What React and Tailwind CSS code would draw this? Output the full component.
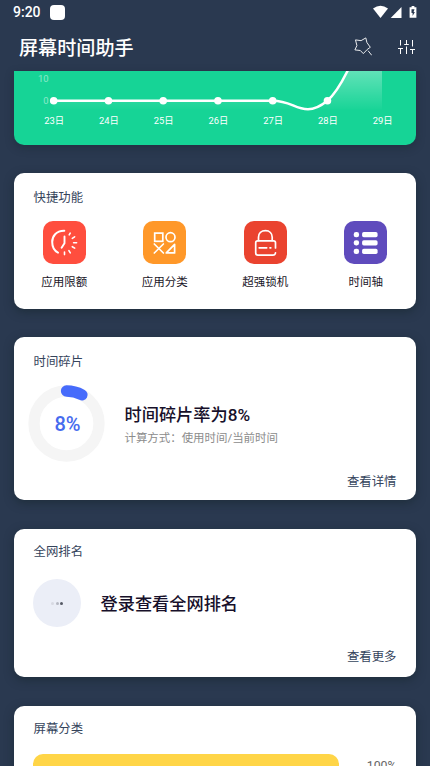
const days = ["23日", "24日", "25日", "26日", "27日", "28日", "29日"];

const shortcuts = [
  { label: "应用限额", color: "bg-[#ff4e3e]", Icon: LimitIcon },
  { label: "应用分类", color: "bg-[#ff9829]", Icon: CategoryIcon },
  { label: "超强锁机", color: "bg-[#ea432f]", Icon: LockIcon },
  { label: "时间轴", color: "bg-[#5f4bbd]", Icon: TimelineIcon },
];

function LimitIcon() {
  return (
    <svg viewBox="0 0 43 43" className="w-full h-full" fill="none" stroke="#fff" strokeLinecap="round">
      <path d="M21.3 9.8 C13 9.6 9.2 15.6 9.2 21 C9.2 26 11.5 29.8 15 31.6" strokeWidth="2" />
      <path d="M21.5 15.5 V22.2 L18.6 26.8" strokeWidth="1.9" />
      <path
        d="M26.2 13.8 L27.2 12.1 M29.3 17.3 L31.6 15.8 M30.6 21.7 H33.6 M29.3 25.7 L31.7 27.1 M25.9 29.6 L27.3 31.9 M21.5 31.1 V33.6"
        strokeWidth="1.6"
      />
    </svg>
  );
}

function CategoryIcon() {
  return (
    <svg viewBox="0 0 43 43" className="w-full h-full" fill="none" stroke="#fff" strokeWidth="1.7">
      <rect x="11.7" y="12.1" width="8.1" height="8.2" />
      <circle cx="27.5" cy="16.2" r="4.5" />
      <path d="M11.3 23 L20.4 32 M20.4 23 L11.3 32" strokeLinecap="round" />
      <path d="M31.6 23.3 V31.9 H23.3 Z" strokeLinejoin="round" />
    </svg>
  );
}

function LockIcon() {
  return (
    <svg viewBox="0 0 43 43" className="w-full h-full" fill="none" stroke="#fff" strokeLinecap="round" strokeLinejoin="round">
      <path d="M14.5 19.5 V16.2 C14.5 12.3 17.4 9.7 21.5 9.7 C25.6 9.7 28.2 12.3 28.2 16.2 V19.5" strokeWidth="1.7" />
      <path d="M31.5 27 V21.8 Q31.5 19.8 29.5 19.8 H13.7 Q11.7 19.8 11.7 21.8 V32.1 Q11.7 34.1 13.7 34.1 H29 Q31.3 34.1 31.5 31.8" strokeWidth="1.7" />
      <path d="M15.2 26.8 H22.7 M26 26.8 H26.8" strokeWidth="1.7" />
    </svg>
  );
}

function TimelineIcon() {
  return (
    <svg viewBox="0 0 43 43" className="w-full h-full" fill="#fff">
      {[11.1, 19.2, 27.8].map((y) => (
        <g key={y}>
          <rect x="9.7" y={y} width="5.4" height="5.2" rx="2.3" />
          <rect x="18.1" y={y} width="15.5" height="5.2" rx="1.7" />
        </g>
      ))}
    </svg>
  );
}

function Card({ title, className = "", children }) {
  return (
    <section className={`flex flex-col rounded-[10px] bg-white px-[19.5px] shadow-[0_3px_10px_rgba(20,35,40,0.5)] ${className}`}>
      <h2 className="text-[12.4px] leading-[18px] text-[#35445c]">{title}</h2>
      {children}
    </section>
  );
}

function StatusBar() {
  return (
    <div className="flex h-6 items-center justify-between px-[13px] text-white">
      <div className="flex items-center gap-[10px]">
        <span className="w-[27px] font-[Roboto] text-[14px] font-medium leading-6">9:20</span>
        <span className="h-[15px] w-[15px] rounded-[4px] bg-white" />
      </div>
      <svg viewBox="0 0 44 14" className="mb-px h-[14px] w-[44px]" fill="#fff">
        <path d="M0 3.4 Q7.5 -1.9 15 3.4 L7.5 13 Z" />
        <path d="M28.5 2 V13 H17.7 Z" />
        <path d="M37 2.2 H38.6 V1 H41.4 V2.2 H43.4 V12.8 H36.6 V2.2 Z" />
        <path d="M41.5 4.2 H38.5 V8 H39.6 V11 L41.9 6.9 H40.6 Z" fill="#2a3950" />
      </svg>
    </div>
  );
}

function Header() {
  return (
    <header className="flex h-[47px] items-center justify-between pb-px pl-[19px] pr-[15px] text-white">
      <h1 className="pt-[3px] text-[19.1px] font-medium leading-7">屏幕时间助手</h1>
      <div className="flex items-center gap-[25px]">
        <svg viewBox="0 0 18 20" className="h-5 w-[18px]" fill="none" stroke="#fff" strokeWidth="0.9" strokeLinejoin="round" strokeLinecap="round">
          <path d="M11.9 1.3 L12.9 5.5 L16.3 10.3 L13.3 12.4 L9.3 16.6 L6.3 13.5 L0.9 12.9 L2.9 8.6 L1.5 2.9 L6.7 3.6 Z" />
          <path d="M14.3 14 L17.5 18" />
        </svg>
        <svg viewBox="0 0 18 16" className="h-4 w-[18px]" fill="none" stroke="#fff" strokeWidth="1">
          <path d="M3.5 1 V6.5 M1 9.5 H6 M3.5 9.5 V15 M9.5 1 V5.5 M7.2 5.5 H11.8 M9.5 7.5 V15 M15.5 1 V7.5 M13 10.5 H18 M15.5 10.5 V15" />
        </svg>
      </div>
    </header>
  );
}

function UsageChart() {
  return (
    <svg viewBox="0 0 402 74" className="block h-[74px] w-[402px] font-[Roboto,'Noto_Sans_CJK_SC',sans-serif]">
      <defs>
        <linearGradient id="area" x1="0" y1="-20" x2="0" y2="39" gradientUnits="userSpaceOnUse">
          <stop offset="0" stopColor="#fff" stopOpacity="0.48" />
          <stop offset="1" stopColor="#fff" stopOpacity="0.01" />
        </linearGradient>
      </defs>
      <path
        d="M39.7 29.7 H258.6 C276 29.7 281 38.3 294 38.3 C302 38.3 308 34 313.4 29.7 C320 24 327 13 333.5 0 L343 -18 H368 V38.5 H39.7 Z"
        fill="url(#area)"
      />
      <path
        d="M39.7 29.7 H258.6 C276 29.7 281 38.3 294 38.3 C302 38.3 308 34 313.4 29.7 C320 24 327 13 333.5 0 L343 -18"
        fill="none"
        stroke="#fff"
        strokeWidth="2.5"
      />
      <g fill="#fff" fillOpacity="0.5" fontSize="9.5" textAnchor="end">
        <text x="34.7" y="11.3">10</text>
        <text x="34.7" y="32.8">0</text>
      </g>
      {days.map((day, i) => (
        <g key={day} fill="#fff">
          {i < 6 && <circle cx={39.7 + i * 54.75} cy="29.7" r="3.8" />}
          <text x={40.3 + i * 54.75} y="53.2" fontSize="9.4" textAnchor="middle">
            {day}
          </text>
        </g>
      ))}
    </svg>
  );
}

function FragmentRing() {
  return (
    <div className="grid h-[77px] w-[77px] shrink-0 place-items-center">
      <svg viewBox="0 0 77 77" className="col-start-1 row-start-1 h-full w-full" fill="none" strokeWidth="11.3">
        <circle cx="38.5" cy="38.5" r="32.5" stroke="#f5f5f5" />
        <path d="M38.5 6 A32.5 32.5 0 0 1 54 9.9" stroke="#466bfb" strokeLinecap="round" />
      </svg>
      <span className="col-start-1 row-start-1 pl-[2px] pt-px font-[Roboto] text-[20px] font-medium leading-6 text-[#466bee]">8%</span>
    </div>
  );
}

export default function App() {
  return (
    <div lang="zh-CN" className="h-[766px] w-[430px] overflow-hidden bg-[#2a3950] font-[Roboto,'Noto_Sans_CJK_SC',sans-serif]">
      <StatusBar />
      <Header />

      <main className="flex flex-col px-[14px]">
        {/* USAGE CHART */}
        <section className="h-[74px] overflow-hidden rounded-b-[10px] bg-[#16d496] shadow-[0_3px_8px_rgba(20,35,40,0.35)]">
          <UsageChart />
        </section>

        {/* SHORTCUTS */}
        <Card title="快捷功能" className="mt-[28px] h-[136px] pt-[16px]">
          <div className="-mx-[19.5px] mt-[14px] grid grid-cols-4">
            {shortcuts.map(({ label, color, Icon }) => (
              <div key={label} className="flex flex-col items-center">
                <div className={`h-[43px] w-[43px] rounded-[10px] ${color}`}>
                  <Icon />
                </div>
                <span className="mt-[9px] text-[11.5px] leading-[18px] text-[#191527]">{label}</span>
              </div>
            ))}
          </div>
        </Card>

        {/* TIME FRAGMENTS */}
        <Card title="时间碎片" className="mt-[28px] h-[163px] pt-[16px]">
          <div className="-ml-[5.5px] mt-[14px] flex items-center">
            <FragmentRing />
            <div className="ml-[19.5px] pt-[3px]">
              <p className="text-[17.2px] font-medium leading-6 text-[#17102a]">时间碎片率为8%</p>
              <p className="mt-[2px] text-[11.45px] leading-[18px] text-[#8c8c8c]">计算方式：使用时间/当前时间</p>
            </div>
          </div>
          <a className="mt-[11px] self-end text-[12.4px] leading-[18px] text-[#35445c]">查看详情</a>
        </Card>

        {/* RANKING */}
        <Card title="全网排名" className="mt-[29px] h-[148px] pt-[14px]">
          <div className="-ml-[0.5px] mt-[18px] flex items-center">
            <div className="flex h-12 w-12 items-center justify-center gap-[1.5px] rounded-full bg-[#ebeef7]">
              <span className="h-[3px] w-[3px] rounded-full bg-[#d7d9e2]" />
              <span className="h-[3px] w-[3px] rounded-full bg-[#b5b8c2]" />
              <span className="h-[3px] w-[3px] rounded-full bg-[#555965]" />
            </div>
            <p className="ml-[19.5px] pt-[2px] text-[17.2px] font-medium leading-6 text-[#17102a]">登录查看全网排名</p>
          </div>
          <a className="mt-[21px] self-end text-[12.4px] leading-[18px] text-[#35445c]">查看更多</a>
        </Card>

        {/* SCREEN CATEGORIES */}
        <Card title="屏幕分类" className="mt-[29px] h-[90px] pt-[14px]">
          <div className="-ml-[0.5px] mt-[16px] flex items-start justify-between">
            <div className="h-6 w-[306px] rounded-[10px] bg-[#ffd547]" />
            <span className="mt-[3px] text-[12.3px] leading-[18px] text-[#666]">100%</span>
          </div>
        </Card>
      </main>
    </div>
  );
}
